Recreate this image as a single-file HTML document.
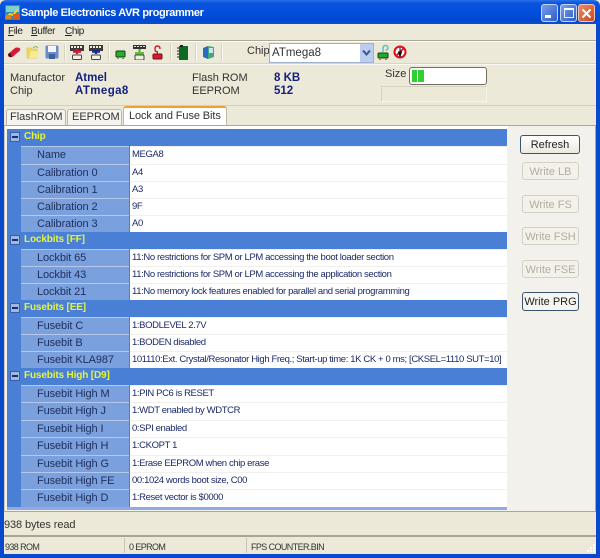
<!DOCTYPE html>
<html><head><meta charset="utf-8">
<style>
html,body{margin:0;padding:0;width:600px;height:558px;overflow:hidden;background:#ece9d8}
body{position:relative;font-family:"Liberation Sans",sans-serif;font-size:11px;color:#222}
div,span,svg{position:absolute;box-sizing:border-box}
.t{white-space:nowrap;line-height:14px}
.h{left:7px;width:500px;height:17px;background:#4a7fd6}
.h .b{left:3px;top:3px;width:10px;height:10px;background:#9db6e2;border:1px solid #3a5fa8}
.h .b:after{content:"";position:absolute;left:1px;top:3px;width:6px;height:2px;background:#1c2f66}
.h .t{left:17px;top:1px;color:#e6f53a;font-weight:bold;font-size:10px;letter-spacing:-.15px}
.r{left:7px;width:500px;height:18px;background:#4a7fd6}
.r .l{left:14px;top:0;width:108px;height:18px;background:#7ba0de;border-top:1px solid #b6c9ec;color:#1f2f5c;font-size:11px;letter-spacing:-.1px;line-height:17px;padding-left:16px;white-space:nowrap}
.r .v{left:123px;top:0;width:377px;height:18px;background:#fff;border-top:1px solid #f0f0ee;color:#1c2a6a;font-size:9.5px;letter-spacing:-.38px;line-height:15px;padding-left:2px;white-space:nowrap}
.btn{left:522px;width:57px;height:18px;border:1px solid #d4d1c4;border-radius:3px;background:#f3f1ea;color:#b0aea2;font-size:11px;line-height:18px;text-align:center;white-space:nowrap}
.act{border:1px solid #3b5570;color:#222;background:linear-gradient(#fff,#ece9e0)}
.sep{top:44px;width:2px;height:17px;background:#d5d2c2;border-right:1px solid #fbfaf5}
.blue{color:#14207e;font-weight:bold;font-size:11.5px}
.m{font-size:10px;letter-spacing:-.4px;color:#222;top:25px}
.i{font-size:11px;color:#333}
.s{font-size:9px;letter-spacing:-.6px;color:#333;top:540px}
</style></head><body>

<!-- title bar -->
<div style="left:0;top:0;width:600px;height:24px;background:linear-gradient(#2a72e8 0,#0a55e0 3px,#0350dc 12px,#0048d0 20px,#0a4cd0 24px);border-radius:6px 6px 0 0"></div>
<svg style="left:5px;top:5px" width="15" height="15" viewBox="0 0 15 15"><rect width="15" height="15" fill="#2a8fb0"/><rect x="1" y="1" width="13" height="6" fill="#7fd0c8"/><path d="M1 13 L5 9 L8 10 L13 4" stroke="#f4d030" stroke-width="2" fill="none"/><rect x="1" y="10" width="5" height="4" fill="#e08820"/><rect x="8" y="9" width="6" height="5" fill="#e05a20"/></svg>
<div class="t" style="left:21px;top:6px;color:#fff;font-weight:bold;font-size:11px;letter-spacing:-.36px">Sample Electronics AVR programmer</div>

<div style="left:541px;top:4px;width:17px;height:18px;border:1px solid #c5d4f5;border-radius:3px;background:linear-gradient(135deg,#7a9fe8,#2e5cc8)"></div>
<div style="left:545px;top:15px;width:6px;height:3px;background:#fff"></div>
<div style="left:560px;top:4px;width:17px;height:18px;border:1px solid #c5d4f5;border-radius:3px;background:linear-gradient(135deg,#7a9fe8,#2e5cc8)"></div>
<div style="left:564px;top:8px;width:10px;height:10px;border:1px solid #e8eefc;border-top:2px solid #fff"></div>
<div style="left:578px;top:4px;width:17px;height:18px;border:1px solid #f0c8b8;border-radius:3px;background:linear-gradient(135deg,#eb8a68,#d04818)"></div>
<svg style="left:581px;top:8px" width="11" height="11" viewBox="0 0 11 11"><path d="M1.5 1.5 L9.5 9.5 M9.5 1.5 L1.5 9.5" stroke="#fff" stroke-width="2"/></svg>

<!-- window borders -->
<div style="left:0;top:24px;width:4px;height:534px;background:#0a48cc"></div>
<div style="left:596px;top:24px;width:4px;height:534px;background:#0a48cc"></div>
<div style="left:0;top:554px;width:600px;height:4px;background:#0a48cc"></div>

<!-- menu -->
<div class="t m" style="left:8px"><u>F</u>ile</div>
<div class="t m" style="left:31px"><u>B</u>uffer</div>
<div class="t m" style="left:65px"><u>C</u>hip</div>
<div style="left:4px;top:40px;width:592px;height:1px;background:#aca899"></div>
<div style="left:4px;top:41px;width:592px;height:1px;background:#fff"></div>

<!-- toolbar icons -->
<svg style="left:7px;top:45px" width="14" height="14" viewBox="0 0 14 14"><path d="M1 9 L8 3 Q10 2 12.5 3 Q14 4.5 12.5 6 L6 11.5 Q3.5 13 1.5 11.5 Q0.5 10.5 1 9Z" fill="#d81838"/><path d="M1 9.5 L3 12 L5 12 L3 8Z" fill="#2a1a1a"/></svg>
<svg style="left:26px;top:45px" width="14" height="15" viewBox="0 0 14 15"><path d="M1 3 H5 L6 4 H11 V13 H1Z" fill="#f0d860" stroke="#d8c050" stroke-width=".6"/><path d="M3 13 L5 6 H13 L11 13Z" fill="#f8ea90"/><path d="M7 3 Q10 0 12 3" stroke="#70c060" fill="none"/></svg>
<svg style="left:45px;top:45px" width="14" height="14" viewBox="0 0 14 14"><rect x="0.5" y="0.5" width="13" height="13" rx="1" fill="#6a8cc8"/><rect x="3" y="1" width="8" height="6" fill="#f2f5fb"/><rect x="4" y="9" width="6" height="5" fill="#3f5f9c"/></svg>
<div class="sep" style="left:64px"></div>
<svg style="left:69px;top:45px" width="16" height="15" viewBox="0 0 16 15"><rect x="1" y="0" width="14" height="6" fill="#3a3a3a"/><path d="M2 1h2v2H2zM5 1h2v2H5zM8 1h2v2H8zM11 1h2v2h-2z" fill="#f0eee0"/><rect x="3.5" y="10" width="9" height="4.5" rx="1" fill="#f3f1e8" stroke="#444"/><path d="M8 4 V9 M4 6.5 H12" stroke="#e01030" stroke-width="2.4"/></svg>
<svg style="left:88px;top:45px" width="16" height="15" viewBox="0 0 16 15"><rect x="1" y="0" width="14" height="6" fill="#3a3a3a"/><path d="M2 1h2v2H2zM5 1h2v2H5zM8 1h2v2H8zM11 1h2v2h-2z" fill="#f0eee0"/><rect x="3.5" y="10" width="9" height="4.5" rx="1" fill="#f3f1e8" stroke="#444"/><path d="M8 4 V9 M4 6.5 H12" stroke="#1a2a9a" stroke-width="2.4"/></svg>
<div class="sep" style="left:108px"></div>
<svg style="left:115px;top:50px" width="12" height="9" viewBox="0 0 12 9"><rect x="1" y="1" width="9" height="6" rx="1" fill="#28b028" stroke="#104010"/><path d="M3 8v1M8 8v1" stroke="#222"/></svg>
<svg style="left:132px;top:45px" width="15" height="15" viewBox="0 0 15 15"><rect x="1" y="0" width="13" height="4" fill="#333"/><path d="M2 1h2v1H2zM5 1h2v1H5zM8 1h2v1H8zM11 1h2v1h-2z" fill="#ddd"/><path d="M7.5 4v3" stroke="#50b020" stroke-width="2"/><rect x="3" y="7" width="9" height="3" fill="#60c030"/><rect x="3" y="10" width="9" height="5" rx="1" fill="#f0eee0" stroke="#444"/></svg>
<svg style="left:152px;top:45px" width="12" height="15" viewBox="0 0 12 15"><path d="M8 4 Q8 1 5.5 1 Q3 1 3 4 Q3 7 5.5 7" stroke="#d02030" stroke-width="1.4" fill="none"/><path d="M5.5 6 v3" stroke="#d02030"/><rect x="1" y="9" width="9" height="5" rx="1" fill="#d81830" stroke="#701018"/></svg>
<div class="sep" style="left:170px"></div>
<svg style="left:177px;top:45px" width="12" height="15" viewBox="0 0 12 15"><rect x="2" y="1" width="9" height="14" fill="#0c6a22"/><path d="M0 3h2M0 6h2M0 9h2M0 12h2" stroke="#222"/><rect x="3" y="0" width="3" height="2" fill="#222"/></svg>
<div class="sep" style="left:195px"></div>
<svg style="left:202px;top:45px" width="13" height="15" viewBox="0 0 13 15"><path d="M1 3 L6 1 V14 L1 12Z" fill="#2a6cc0"/><path d="M6 1 L12 2 V12 L6 14Z" fill="#40a880"/><path d="M7 3h4v5H7z" fill="#cfe2f0"/></svg>
<div class="sep" style="left:221px"></div>

<div class="t" style="left:247px;top:44px;font-size:11px;color:#333">Chip</div>
<div style="left:269px;top:43px;width:105px;height:20px;border:1px solid #9fb0d0;background:#fff"></div>
<div class="t" style="left:272px;top:46px;font-size:11.5px;color:#333">ATmega8</div>
<div style="left:360px;top:44px;width:13px;height:18px;background:#bccdf0"></div>
<svg style="left:361px;top:49px" width="11" height="8" viewBox="0 0 11 8"><path d="M2 1.5 L5.5 5.5 L9 1.5" stroke="#3a5590" stroke-width="2" fill="none"/></svg>
<svg style="left:377px;top:44px" width="13" height="16" viewBox="0 0 13 16"><path d="M6 8 V5 Q6 1 9 1.5 Q11 2 11 4 Q11 6 8.5 6" stroke="#40c8c8" stroke-width="1.4" fill="none"/><rect x="1" y="9" width="10" height="5" rx="1" fill="#28a828" stroke="#104010"/><path d="M3 15v1M9 15v1" stroke="#222"/></svg>
<svg style="left:393px;top:45px" width="14" height="14" viewBox="0 0 14 14"><circle cx="7" cy="7" r="5.5" fill="#fff" stroke="#d81020" stroke-width="2"/><path d="M3 11 L11 3" stroke="#d81020" stroke-width="1.6"/><path d="M7 2.5 V7 M5.5 7 H8.5 L7 11.5Z" fill="#111" stroke="#111"/></svg>

<div style="left:4px;top:63px;width:592px;height:1px;background:#d8d5c4"></div>
<div style="left:4px;top:64px;width:592px;height:1px;background:#faf9f2"></div>

<!-- info -->
<div class="t i" style="left:10px;top:71px">Manufactor</div>
<div class="t i" style="left:10px;top:84px">Chip</div>
<div class="t blue" style="left:75px;top:71px">Atmel</div>
<div class="t blue" style="left:75px;top:84px;letter-spacing:.4px">ATmega8</div>
<div class="t i" style="left:192px;top:71px">Flash ROM</div>
<div class="t i" style="left:192px;top:84px">EEPROM</div>
<div class="t blue" style="left:274px;top:71px">8 KB</div>
<div class="t blue" style="left:274px;top:84px">512</div>
<div class="t i" style="left:385px;top:67px">Size</div>
<div style="left:409px;top:67px;width:78px;height:18px;border:1px solid #6f6f64;border-radius:3px;background:#fff"></div>
<div style="left:412px;top:70px;width:5px;height:12px;background:#30d030"></div>
<div style="left:418px;top:70px;width:6px;height:12px;background:#30d030"></div>
<div style="left:381px;top:86px;width:106px;height:16px;border:1px solid #d6d3c2;border-right-color:#f5f3ea;border-bottom-color:#f5f3ea"></div>
<div style="left:4px;top:105px;width:592px;height:1px;background:#d2cfbe"></div>

<!-- tabs -->
<div style="left:6px;top:109px;width:60px;height:17px;background:#f5f4ee;border:1px solid #bdbaa8;border-bottom:0;border-radius:3px 3px 0 0"></div>
<div class="t i" style="left:10px;top:110px">FlashROM</div>
<div style="left:67px;top:109px;width:55px;height:17px;background:#f5f4ee;border:1px solid #bdbaa8;border-bottom:0;border-radius:3px 3px 0 0"></div>
<div class="t i" style="left:72px;top:110px">EEPROM</div>
<div style="left:123px;top:106px;width:104px;height:20px;background:#fff;border:1px solid #bdbaa8;border-top:2px solid #f0a030;border-bottom:0;border-radius:3px 3px 0 0"></div>
<div class="t i" style="left:129px;top:109px;letter-spacing:-.1px">Lock and Fuse Bits</div>

<!-- panel -->
<div style="left:4px;top:125px;width:592px;height:387px;background:#f3f1ec;border:1px solid #aca899;border-left:1px solid #cfccba"></div>
<div style="left:227px;top:125px;width:369px;height:1px;background:#aca899"></div>
<div style="left:5px;top:126px;width:503px;height:3px;background:#fff"></div>
<div style="left:7px;top:129px;width:500px;height:381px;background:#4a7fd6"></div>

<div class="h" style="top:129px"><div class="b"></div><div class="t">Chip</div></div>
<div class="r" style="top:146px"><div class="l">Name</div><div class="v">MEGA8</div></div>
<div class="r" style="top:164px"><div class="l">Calibration 0</div><div class="v">A4</div></div>
<div class="r" style="top:181px"><div class="l">Calibration 1</div><div class="v">A3</div></div>
<div class="r" style="top:198px"><div class="l">Calibration 2</div><div class="v">9F</div></div>
<div class="r" style="top:215px"><div class="l">Calibration 3</div><div class="v">A0</div></div>

<div class="h" style="top:232px"><div class="b"></div><div class="t">Lockbits [FF]</div></div>
<div class="r" style="top:249px"><div class="l">Lockbit 65</div><div class="v">11:No restrictions for SPM or LPM accessing the boot loader section</div></div>
<div class="r" style="top:266px"><div class="l">Lockbit 43</div><div class="v">11:No restrictions for SPM or LPM accessing the application section</div></div>
<div class="r" style="top:283px"><div class="l">Lockbit 21</div><div class="v">11:No memory lock features enabled for parallel and serial programming</div></div>

<div class="h" style="top:300px"><div class="b"></div><div class="t">Fusebits [EE]</div></div>
<div class="r" style="top:317px"><div class="l">Fusebit C</div><div class="v">1:BODLEVEL 2.7V</div></div>
<div class="r" style="top:334px"><div class="l">Fusebit B</div><div class="v">1:BODEN disabled</div></div>
<div class="r" style="top:351px"><div class="l">Fusebit KLA987</div><div class="v">101110:Ext. Crystal/Resonator High Freq.; Start-up time: 1K CK + 0 ms; [CKSEL=1110 SUT=10]</div></div>

<div class="h" style="top:368px"><div class="b"></div><div class="t">Fusebits High [D9]</div></div>
<div class="r" style="top:385px"><div class="l">Fusebit High M</div><div class="v">1:PIN PC6 is RESET</div></div>
<div class="r" style="top:402px"><div class="l">Fusebit High J</div><div class="v">1:WDT enabled by WDTCR</div></div>
<div class="r" style="top:420px"><div class="l">Fusebit High I</div><div class="v">0:SPI enabled</div></div>
<div class="r" style="top:437px"><div class="l">Fusebit High H</div><div class="v">1:CKOPT 1</div></div>
<div class="r" style="top:455px"><div class="l">Fusebit High G</div><div class="v">1:Erase EEPROM when chip erase</div></div>
<div class="r" style="top:472px"><div class="l">Fusebit High FE</div><div class="v">00:1024 words boot size, C00</div></div>
<div class="r" style="top:489px"><div class="l">Fusebit High D</div><div class="v">1:Reset vector is $0000</div></div>
<div style="left:7px;top:507px;width:500px;height:3px;background:#8fabe2"></div>

<!-- buttons -->
<div class="btn act" style="left:520px;top:135px;width:60px;height:19px">Refresh</div>
<div class="btn" style="top:162px">Write LB</div>
<div class="btn" style="top:195px">Write FS</div>
<div class="btn" style="top:227px">Write FSH</div>
<div class="btn" style="top:260px">Write FSE</div>
<div class="btn act" style="top:292px;height:19px;background:#f6f5f0">Write PRG</div>

<!-- status -->
<div class="t i" style="left:4px;top:518px;letter-spacing:-.1px">938 bytes read</div>
<div style="left:4px;top:535px;width:592px;height:2px;background:#a8a594"></div>
<div style="left:4px;top:537px;width:592px;height:17px;background:#ece9d8"></div>
<div style="left:124px;top:538px;width:1px;height:15px;background:#c8c5b4"></div>
<div style="left:246px;top:538px;width:1px;height:15px;background:#c8c5b4"></div>
<div class="t s" style="left:5px">938 ROM</div>
<div class="t s" style="left:129px">0 EPROM</div>
<div class="t s" style="left:251px">FPS COUNTER.BIN</div>
<svg style="left:585px;top:543px" width="11" height="11" viewBox="0 0 11 11"><path d="M8 1h2v2H8zM5 4h2v2H5zM8 4h2v2H8zM2 7h2v2H2zM5 7h2v2H5zM8 7h2v2H8z" fill="#fff"/></svg>
</body></html>
